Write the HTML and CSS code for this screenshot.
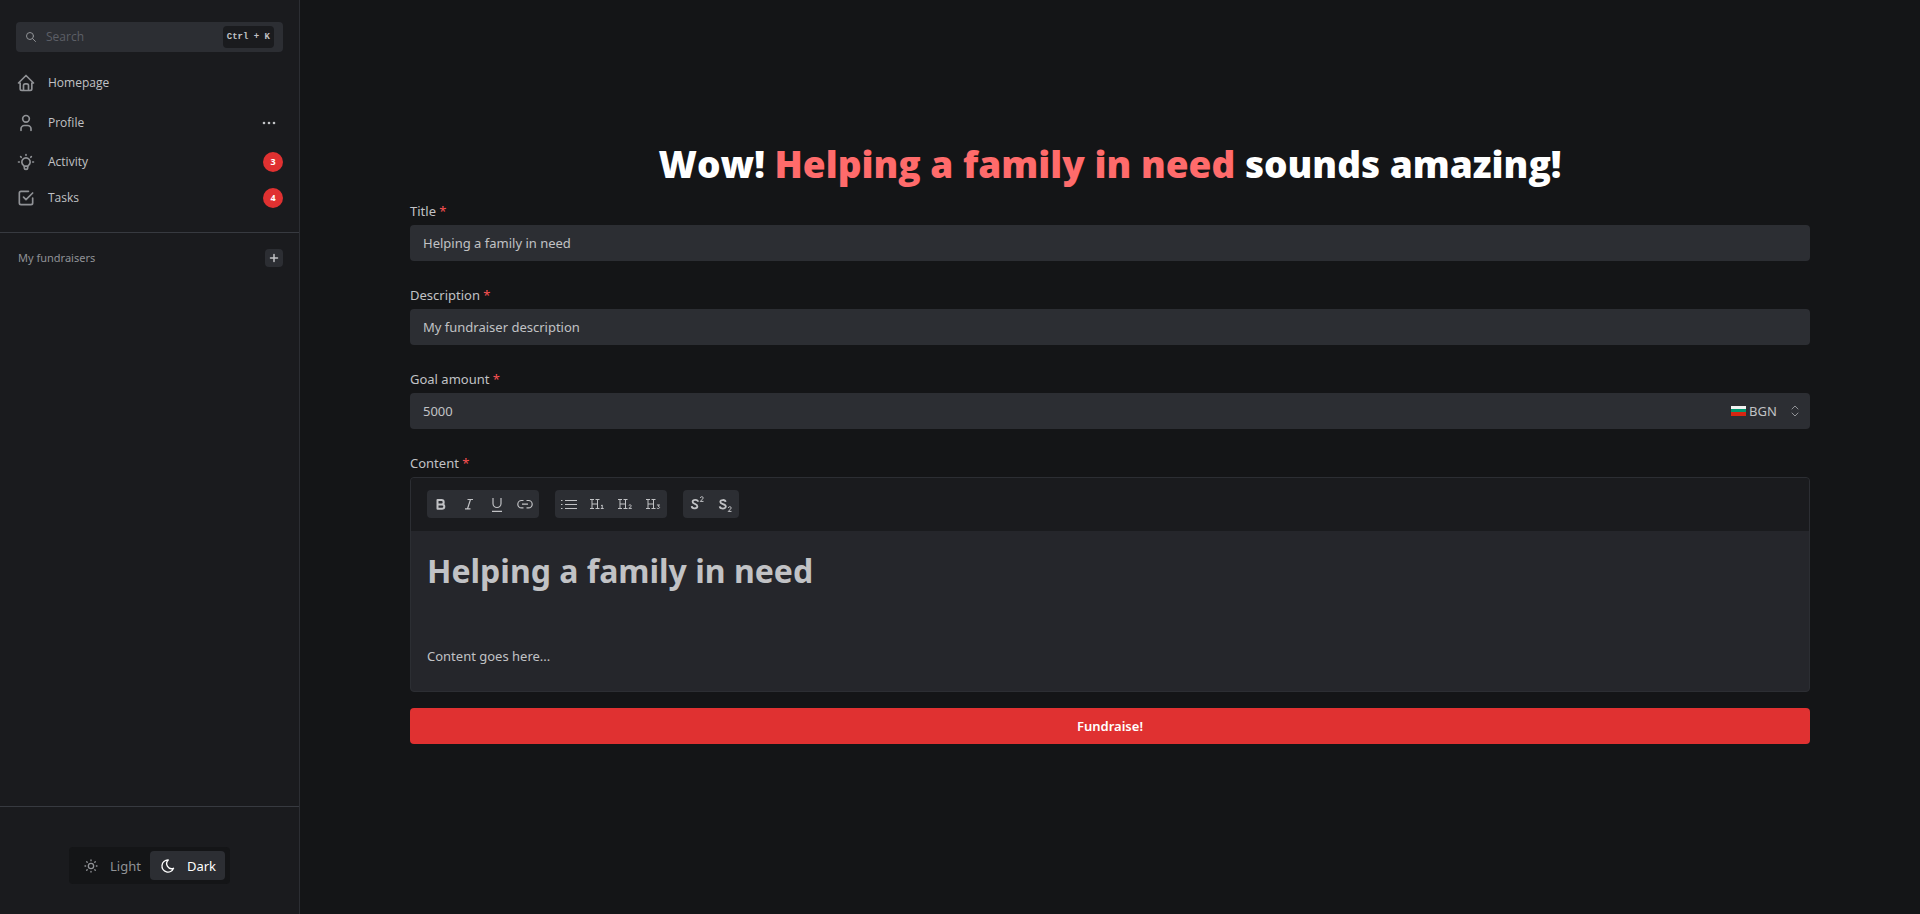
FILE: index.html
```html
<!DOCTYPE html>
<html lang="en">
<head>
<meta charset="utf-8">
<title>Create fundraiser</title>
<link rel="stylesheet" href="styles.css">
</head>
<body>
<div class="app">
  <aside class="sidebar">
    <label class="search">
      <svg class="search-icon" viewBox="0 0 24 24"><circle cx="10" cy="10" r="7"/><path d="M21 21l-6-6"/></svg>
      <input class="search-input" type="search" placeholder="Search" aria-label="Search">
      <kbd class="kbd">Ctrl + K</kbd>
    </label>
    <nav class="nav">
      <a class="nav-link" href="#">
        <svg class="nav-icon" viewBox="0 0 24 24"><path d="M5 12H3l9-9 9 9h-2M5 12v7a2 2 0 0 0 2 2h10a2 2 0 0 0 2-2v-7M9 21v-6a2 2 0 0 1 2-2h2a2 2 0 0 1 2 2v6"/></svg>
        <span>Homepage</span>
      </a>
      <div class="nav-row">
        <a class="nav-link" href="#">
          <svg class="nav-icon" viewBox="0 0 24 24"><circle cx="12" cy="7" r="4"/><path d="M6 21v-2a4 4 0 0 1 4-4h4a4 4 0 0 1 4 4v2"/></svg>
          <span>Profile</span>
        </a>
        <button class="more" type="button" aria-label="Profile menu">
          <svg class="more-icon" viewBox="0 0 16 16"><circle cx="3" cy="8" r="1.300"/><circle cx="8" cy="8" r="1.300"/><circle cx="13" cy="8" r="1.300"/></svg>
        </button>
      </div>
      <a class="nav-link" href="#">
        <svg class="nav-icon" viewBox="0 0 24 24"><path d="M3 12h1M12 3v1M20 12h1M5.600 5.600l.7.7M18.400 5.600l-.7.7M9 16a5 5 0 1 1 6 0a3.500 3.500 0 0 0-1 3a2 2 0 0 1-4 0a3.500 3.500 0 0 0-1-3M9.700 17h4.600"/></svg>
        <span>Activity</span>
        <span class="badge">3</span>
      </a>
      <a class="nav-link" href="#">
        <svg class="nav-icon" viewBox="0 0 24 24"><path d="M9 11l3 3 8-8M20 12v6a2 2 0 0 1-2 2H6a2 2 0 0 1-2-2V6a2 2 0 0 1 2-2h9"/></svg>
        <span>Tasks</span>
        <span class="badge">4</span>
      </a>
    </nav>
    <section class="fundraisers">
      <h2 class="fundraisers-title">My fundraisers</h2>
      <button class="add" type="button" aria-label="Create fundraiser">
        <svg class="add-icon" viewBox="0 0 24 24"><path d="M12 5v14M5 12h14"/></svg>
      </button>
    </section>
    <footer class="theme">
      <div class="segmented" role="radiogroup" aria-label="Color scheme">
        <label class="segment">
          <input class="segment-input" type="radio" name="scheme">
          <svg class="segment-icon" viewBox="0 0 24 24"><circle cx="12" cy="12" r="4"/><path d="M3 12h1M12 3v1M20 12h1M12 20v1M5.600 5.600l.7.7M18.400 5.600l-.7.7M17.700 17.700l.7.7M6.300 17.700l-.7.7"/></svg>
          <span>Light</span>
        </label>
        <label class="segment segment-active">
          <input class="segment-input" type="radio" name="scheme" checked>
          <svg class="segment-icon" viewBox="0 0 24 24"><path d="M12 3h.4a7.500 7.500 0 0 0 7.900 12.400A9 9 0 1 1 12 3z"/></svg>
          <span>Dark</span>
        </label>
      </div>
    </footer>
  </aside>
  <main class="main">
    <form class="form">
      <h1 class="headline">Wow! <span class="accent">Helping a family in need</span> sounds amazing!</h1>
      <div class="field">
        <label class="label" for="title">Title <span class="required">*</span></label>
        <input class="input" id="title" type="text" value="Helping a family in need">
      </div>
      <div class="field">
        <label class="label" for="description">Description <span class="required">*</span></label>
        <input class="input" id="description" type="text" value="My fundraiser description">
      </div>
      <div class="field">
        <label class="label" for="goal">Goal amount <span class="required">*</span></label>
        <div class="input amount">
          <input class="amount-input" id="goal" type="text" inputmode="numeric" value="5000">
          <svg class="flag" viewBox="0 0 15 10"><path fill="#f2f2f2" d="M0 0h15v4H0z"/><path fill="#00966e" d="M0 3h15v4H0z"/><path fill="#d62612" d="M0 6h15v4H0z"/></svg>
          <select class="currency" aria-label="Currency"><option>BGN</option></select>
          <svg class="chevrons" viewBox="0 0 24 24"><path d="M6 8l6-6 6 6M18 16l-6 6-6-6"/></svg>
        </div>
      </div>
      <div class="field">
        <span class="label" id="content-label">Content <span class="required">*</span></span>
        <div class="editor">
          <div class="toolbar" role="toolbar" aria-label="Formatting">
            <div class="group">
              <button class="tool" type="button" aria-label="Bold"><svg class="tool-icon heavy" viewBox="0 0 16 16"><path d="M4.500 4h4a2.200 2.200 0 0 1 0 4.400h-4zM4.500 8.400h4.600a2.200 2.200 0 0 1 0 4.400H4.500z"/></svg></button>
              <button class="tool" type="button" aria-label="Italic"><svg class="tool-icon" viewBox="0 0 16 16"><path d="M6.500 3.500h5.500M4 12.800h5.500M9.500 3.500l-3 9.300"/></svg></button>
              <button class="tool" type="button" aria-label="Underline"><svg class="tool-icon" viewBox="0 0 16 16"><path d="M4 2v5.500a4 4 0 0 0 8 0V2M3 15.300h10"/></svg></button>
              <button class="tool" type="button" aria-label="Link"><svg class="tool-icon" viewBox="0 0 16 16"><path d="M6.500 4.500h-2a3.700 3.700 0 0 0 0 7.400h2M9.500 4.500h2a3.700 3.700 0 0 1 0 7.400h-2M5 8.200h6"/></svg></button>
            </div>
            <div class="group">
              <button class="tool" type="button" aria-label="Bullet list"><svg class="tool-icon" viewBox="0 0 16 16"><path d="M4 4.500h12M4 8.500h12M4 12.500h12M0 4.500h1.500M0 8.500h1.500M0 12.500h1.500"/></svg></button>
              <button class="tool" type="button" aria-label="Heading 1"><svg class="tool-icon thin" viewBox="0 0 16 16"><path d="M1 3.500h4M6.500 3.500h4M1 12.500h4M6.500 12.500h4M3 3.500v9M8.500 3.500v9M3 8h5.500M12 9.700l1.200-.7v3.500M11.800 12.500h2.900"/></svg></button>
              <button class="tool" type="button" aria-label="Heading 2"><svg class="tool-icon thin" viewBox="0 0 16 16"><path d="M1 3.500h4M6.500 3.500h4M1 12.500h4M6.500 12.500h4M3 3.500v9M8.500 3.500v9M3 8h5.500M11.800 9.700c.2-1.100 2.600-1 2.500.2c0 .9-1.700 1.500-2.500 2.500h3"/></svg></button>
              <button class="tool" type="button" aria-label="Heading 3"><svg class="tool-icon thin" viewBox="0 0 16 16"><path d="M1 3.500h4M6.500 3.500h4M1 12.500h4M6.500 12.500h4M3 3.500v9M8.500 3.500v9M3 8h5.500M11.900 9h2.600l-1.500 1.400c2.300 0 1.900 2.500-.2 2.100l-1-.4"/></svg></button>
            </div>
            <div class="group">
              <button class="tool" type="button" aria-label="Superscript"><svg class="tool-icon" viewBox="0 0 16 16"><path class="bold-stroke" d="M9 5.800C8.800 3.300 3.800 3.200 3.600 5.800c-.1 2.600 4.900 1.700 4.800 4.600c-.2 2.700-5.600 2.600-5.700-.3"/><path class="fine-stroke" d="M11.300 2c.1-1.700 3-1.700 2.900 0c0 1.200-2.100 2-3 3.400h3.300"/></svg></button>
              <button class="tool" type="button" aria-label="Subscript"><svg class="tool-icon" viewBox="0 0 16 16"><path class="bold-stroke" d="M8.600 5.800C8.200 3.300 3.200 3.500 3.300 6c.1 2.600 5.400 1.500 5.500 4.400c0 2.900-5.800 2.800-6.100-.1"/><path class="fine-stroke" d="M11.300 12c.1-1.700 3-1.700 2.900 0c0 1.200-2.100 2-3 3.400h3.300"/></svg></button>
            </div>
          </div>
          <div class="content" contenteditable="true" role="textbox" aria-multiline="true" aria-labelledby="content-label">
            <h1 class="content-title">Helping a family in need</h1>
            <p class="content-text"><br></p>
            <p class="content-text">Content goes here...</p>
          </div>
        </div>
      </div>
      <button class="submit" type="submit">Fundraise!</button>
    </form>
  </main>
</div>
</body>
</html>
```
FILE: styles.css
```css
*, *::before, *::after { box-sizing: border-box; }

body {
  margin: 0;
  background: #141517;
  color: #c1c2c5;
  font: 13px/22px "Noto Sans", "Open Sans", sans-serif;
}

button, input, select { font: inherit; color: inherit; border: 0; margin: 0; padding: 0; background: none; outline: none; }
button { cursor: pointer; }
a { color: inherit; text-decoration: none; }
svg { display: block; flex: none; fill: none; stroke: currentColor; stroke-width: 2; stroke-linecap: round; stroke-linejoin: round; }

.app { display: flex; min-height: 100vh; }

/* Sidebar */
.sidebar {
  display: flex;
  flex: none;
  flex-direction: column;
  width: 300px;
  padding-top: 22px;
  background: #1a1b1e;
  border-right: 1px solid #2c2e33;
  font-family: "Open Sans", "Noto Sans", sans-serif;
  font-size: 12px;
}
.search {
  display: flex;
  align-items: center;
  height: 30px;
  margin: 0 16px 13px;
  padding: 0 9px;
  border-radius: 4px;
  background: #2c2e33;
}
.search-icon { width: 12px; height: 12px; color: #909296; }
.search-input { flex: 1; min-width: 0; margin-left: 9px; }
.search-input::placeholder { color: #5c5f66; opacity: 1; }
.kbd {
  padding: 0 4px;
  border-radius: 4px;
  background: #1a1b1e;
  font: bold 9px/22px "Liberation Mono", monospace;
}
.nav { padding-bottom: 16px; border-bottom: 1px solid #373a40; }
.nav-link { display: flex; flex: 1; align-items: center; gap: 12px; height: 36px; padding: 0 16px; }
.nav-icon { width: 20px; height: 20px; color: #909296; }
.nav-row { display: flex; align-items: center; height: 43px; padding-right: 16px; }
.more { display: grid; place-items: center; width: 28px; height: 28px; }
.more-icon { width: 16px; height: 16px; fill: currentColor; stroke: none; }
.badge {
  width: 20px;
  margin-left: auto;
  border-radius: 50%;
  background: #e03131;
  color: #fff;
  font-size: 9px;
  font-weight: 700;
  line-height: 20px;
  text-align: center;
}
.fundraisers { display: flex; align-items: center; justify-content: space-between; padding: 14px 16px 14px 18px; }
.fundraisers-title { margin: 0; color: #909296; font-family: "Noto Sans", sans-serif; font-size: 11px; font-weight: 400; }
.add { display: grid; place-items: center; width: 18px; height: 18px; border-radius: 4px; background: #2c2e33; }
.add-icon { width: 12px; height: 12px; stroke-width: 3; }
.theme { display: flex; justify-content: center; margin-top: auto; padding: 40px 16px 30px; border-top: 1px solid #373a40; }
.segmented { display: flex; padding: 4px 5px; border-radius: 4px; background: #141517; font-family: "Noto Sans", sans-serif; font-size: 13px; }
.segment { display: flex; align-items: center; gap: 11px; height: 29px; padding: 0 9px; border-radius: 4px; color: #909296; cursor: pointer; }
.segment-active { padding: 0 9px 0 10px; background: #2c2e33; color: #fff; }
.segment-input { position: absolute; opacity: 0; }
.segment-icon { width: 16px; height: 16px; }

/* Form */
.main { display: grid; flex: 1; place-items: center; padding: 16px 16px 54px; }
.form { width: 100%; max-width: 1400px; }
.headline { margin: 0 0 5px; color: #fff; font-family: "Open Sans", "Noto Sans", sans-serif; font-size: 37px; font-weight: 800; line-height: 62px; text-align: center; }
.accent { color: #ff6b6b; }
.field { margin-bottom: 23px; }
.field:last-of-type { margin-bottom: 16px; }
.label { display: block; margin-bottom: 3px; }
.required { color: #fa5252; }
.input { display: block; width: 100%; height: 36px; padding: 0 13px; border-radius: 4px; background: #2c2e33; }
.amount { display: flex; align-items: center; }
.amount-input { flex: 1; min-width: 0; }
.flag { width: 15px; height: 10px; margin-right: 3px; stroke: none; }
.currency { margin-right: 12px; appearance: none; }
.chevrons { width: 12px; height: 12px; margin-right: -4px; color: #909296; }

/* Editor */
.editor { overflow: hidden; border: 1px solid #2c2e33; border-radius: 4px; background: #25262b; }
.toolbar { display: flex; gap: 16px; padding: 12px 16px 13px; background: #1a1b1e; }
.group { display: flex; border-radius: 4px; background: #2c2e33; }
.tool { display: grid; place-items: center; width: 28px; height: 28px; }
.tool-icon { width: 16px; height: 16px; stroke-width: 1.2; stroke-linecap: butt; }
.heavy { stroke-width: 2; }
.thin { stroke-width: 1; }
.bold-stroke { stroke-width: 1.8; }
.fine-stroke { stroke-width: 1; }
.content { padding: 18px 16px 24px; outline: none; }
.content-title { margin: 0 0 20px; font-size: 32px; font-weight: 700; line-height: 44px; }
.content-text { margin: 0 0 10px; }
.content-text:last-child { margin: 0; }

.submit { display: block; width: 100%; height: 36px; border-radius: 4px; background: #e03131; color: #fff; font-weight: 600; }
```
